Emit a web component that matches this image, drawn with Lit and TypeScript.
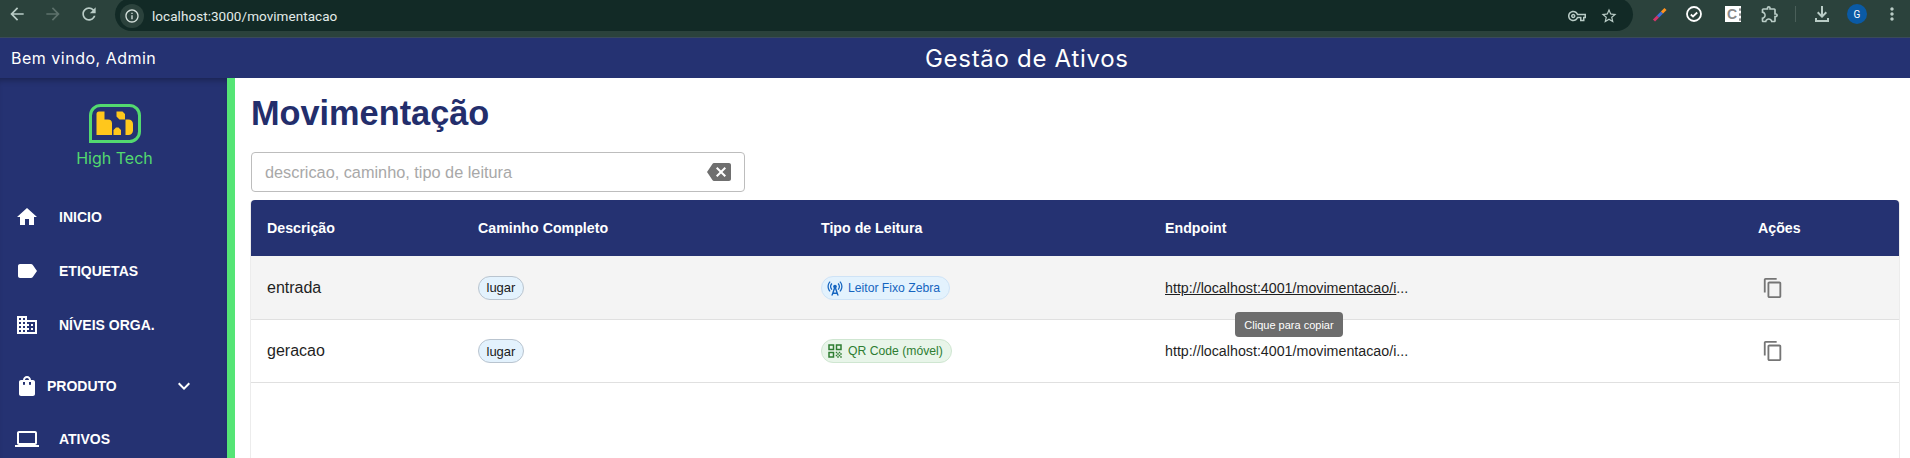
import { LitElement, html, css } from "lit";
import { customElement } from "lit/decorators.js";

const I = (d: string, size = 24, cls = "") => html`<svg class=${cls} width=${size} height=${size} viewBox="0 0 24 24" fill="currentColor"><path d=${d}></path></svg>`;

const ICONS = {
  home: "M10 20v-6h4v6h5v-8h3L12 3 2 12h3v8z",
  label: "M17.63 5.84C17.27 5.33 16.67 5 16 5L5 5.01C3.9 5.01 3 5.9 3 7v10c0 1.1.9 1.99 2 1.99L16 19c.67 0 1.27-.33 1.63-.84L22 12l-4.37-6.16z",
  domain: "M12 7V3H2v18h20V7H12zM6 19H4v-2h2v2zm0-4H4v-2h2v2zm0-4H4V9h2v2zm0-4H4V5h2v2zm4 12H8v-2h2v2zm0-4H8v-2h2v2zm0-4H8V9h2v2zm0-4H8V5h2v2zm10 12h-8v-2h2v-2h-2v-2h2v-2h-2V9h8v10zm-2-8h-2v2h2v-2zm0 4h-2v2h2v-2z",
  bag: "M18 6h-2c0-2.21-1.79-4-4-4S8 3.79 8 6H6c-1.1 0-2 .9-2 2v12c0 1.1.9 2 2 2h12c1.1 0 2-.9 2-2V8c0-1.1-.9-2-2-2zm-8 4c0 .55-.45 1-1 1s-1-.45-1-1V8h2v2zm2-6c1.1 0 2 .9 2 2h-4c0-1.1.9-2 2-2zm4 6c0 .55-.45 1-1 1s-1-.45-1-1V8h2v2z",
  chevron: "M7.41 8.59 12 13.17l4.59-4.58L18 10l-6 6-6-6z",
  laptop: "M20 18c1.1 0 1.99-.9 1.99-2L22 6c0-1.1-.9-2-2-2H4c-1.1 0-2 .9-2 2v10c0 1.1.9 2 2 2H0v2h24v-2h-4zM4 6h16v10H4V6z",
  copy: "M16 1H4c-1.1 0-2 .9-2 2v14h2V3h12V1zm3 4H8c-1.1 0-2 .9-2 2v14c0 1.1.9 2 2 2h11c1.1 0 2-.9 2-2V7c0-1.1-.9-2-2-2zm0 16H8V7h11v14z",
  backspace: "M22 3H7c-.69 0-1.23.35-1.59.88L0 12l5.41 8.11c.36.53.9.89 1.59.89h15c1.1 0 2-.9 2-2V5c0-1.1-.9-2-2-2zm-3 12.59L17.59 17 14 13.41 10.41 17 9 15.59 12.59 12 9 8.41 10.41 7 14 10.59 17.59 7 19 8.41 15.41 12 19 15.59z",
  tower: "M7.3 14.7l1.2-1.2c-1-1-1.5-2.3-1.5-3.5 0-1.3.5-2.6 1.5-3.5L7.3 5.3c-1.3 1.3-2 3-2 4.7s.7 3.4 2 4.7zM19.1 2.9l-1.2 1.2c1.6 1.6 2.4 3.8 2.4 5.9 0 2.1-.8 4.3-2.4 5.9l1.2 1.2c2-2 2.9-4.5 2.9-7.1 0-2.6-1-5.1-2.9-7.1zM6.1 4.1L4.9 2.9C3 4.9 2 7.4 2 10s1 5.1 2.9 7.1l1.2-1.2c-1.6-1.6-2.4-3.8-2.4-5.9 0-2.1.8-4.3 2.4-5.9zm10.6 10.6c1.3-1.3 2-3 2-4.7-.1-1.7-.7-3.4-2-4.7l-1.2 1.2c1 1 1.5 2.3 1.5 3.5 0 1.3-.5 2.6-1.5 3.5l1.2 1.2zM14.5 10c0-1.4-1.1-2.5-2.5-2.5S9.5 8.6 9.5 10c0 .8.4 1.5.9 2L7 22h2l.7-2h4.6l.7 2h2l-3.4-10c.5-.5.9-1.2.9-2zm-4.1 8L12 13.2l1.6 4.8h-3.2z",
  qr: "M3 11h8V3H3v8zm2-6h4v4H5V5zM3 21h8v-8H3v8zm2-6h4v4H5v-4zM13 3v8h8V3h-8zm6 6h-4V5h4v4zM13 13h2v2h-2zM15 15h2v2h-2zM13 17h2v2h-2zM15 19h2v2h-2zM17 17h2v2h-2zM17 13h2v2h-2zM19 15h2v2h-2zM19 19h2v2h-2z",
  back: "M20 11H7.83l5.59-5.59L12 4l-8 8 8 8 1.41-1.41L7.83 13H20v-2z",
  forward: "M12 4l-1.41 1.41L16.17 11H4v2h12.17l-5.58 5.59L12 20l8-8z",
  reload: "M17.65 6.35C16.2 4.9 14.21 4 12 4c-4.42 0-7.99 3.58-7.99 8s3.57 8 7.99 8c3.73 0 6.84-2.55 7.73-6h-2.08c-.82 2.33-3.04 4-5.65 4-3.31 0-6-2.69-6-6s2.69-6 6-6c1.66 0 3.14.69 4.22 1.78L13 11h7V4l-2.35 2.35z",
  info: "M11 7h2v2h-2zm0 4h2v6h-2zm1-9C6.48 2 2 6.48 2 12s4.48 10 10 10 10-4.48 10-10S17.52 2 12 2zm0 18c-4.41 0-8-3.59-8-8s3.59-8 8-8 8 3.59 8 8-3.59 8-8 8z",
  key: "M22 19h-6v-4h-2.68c-1.14 2.32-3.5 4-6.32 4-3.86 0-7-3.14-7-7s3.14-7 7-7c2.82 0 5.18 1.68 6.32 4H24v6h-2v4zm-4-2h2v-4h2v-2H11.95l-.23-.67C11 8.6 9.13 7 7 7c-2.76 0-5 2.24-5 5s2.24 5 5 5c2.13 0 4-1.6 4.72-3.33l.23-.67H18v4zM7 15c-1.65 0-3-1.35-3-3s1.35-3 3-3 3 1.35 3 3-1.35 3-3 3zm0-4c-.55 0-1 .45-1 1s.45 1 1 1 1-.45 1-1-.45-1-1-1z",
  star: "M22 9.24l-7.19-.62L12 2 9.19 8.63 2 9.24l5.46 4.73L5.82 21 12 17.27 18.18 21l-1.63-7.03L22 9.24zM12 15.4l-3.76 2.27 1-4.28-3.32-2.88 4.38-.38L12 6.1l1.71 4.04 4.38.38-3.32 2.88 1 4.28L12 15.4z",
  puzzle: "M10.5 4.5c.28 0 .5.22.5.5v2h6v6h2c.28 0 .5.22.5.5s-.22.5-.5.5h-2v6h-2.12c-.68-1.75-2.39-3-4.38-3s-3.7 1.25-4.38 3H4v-2.12c1.75-.68 3-2.39 3-4.38 0-1.99-1.24-3.7-2.99-4.38L4 7h6V5c0-.28.22-.5.5-.5m0-2C9.12 2.5 8 3.62 8 5H4c-1.1 0-1.99.9-1.99 2v3.8h.49c1.49 0 2.7 1.21 2.7 2.7s-1.21 2.7-2.7 2.7H2V20c0 1.1.9 2 2 2h3.8v-.5c0-1.49 1.21-2.7 2.7-2.7 1.49 0 2.7 1.21 2.7 2.7v.5H17c1.1 0 2-.9 2-2v-4c1.38 0 2.5-1.12 2.5-2.5S20.38 11 19 11V7c0-1.1-.9-2-2-2h-4c0-1.38-1.12-2.5-2.5-2.5z",
  download: "M12 16l-5-5 1.41-1.41L11 12.17V4h2v8.17l2.59-2.58L17 11l-5 5zM5 20v-4h2v2h10v-2h2v4H5z",
  dots: "M12 8c1.1 0 2-.9 2-2s-.9-2-2-2-2 .9-2 2 .9 2 2 2zm0 2c-1.1 0-2 .9-2 2s.9 2 2 2 2-.9 2-2-.9-2-2-2zm0 6c-1.1 0-2 .9-2 2s.9 2 2 2 2-.9 2-2-.9-2-2-2z",
};

@customElement("app-root")
export class AppRoot extends LitElement {
  static styles = css`
    :host { display: block; width: 1910px; height: 458px; overflow: hidden; background: #fff; font-family: "Liberation Sans", Arial, sans-serif; }
    .chrome { height: 37px; background: #2b423c; display: flex; align-items: flex-start; padding-left: 7px; color: #b9ccc6; border-bottom: 1px solid #3a4a5a; overflow: hidden; }
    .nav { display: flex; gap: 16px; align-items: center; height: 28px; }
    .nav .dim { color: #5d716b; }
    .omni { margin-left: 16px; flex: 0 0 1518px; height: 33px; margin-top: -2px; background: #122a26; border-radius: 17px; display: flex; align-items: center; gap: 8px; padding: 2px 0 0 5px; box-sizing: border-box; color: #e3ece9; font: 13.5px Roboto, "Noto Sans", sans-serif; }
    .omni-badge { width: 24px; height: 24px; border-radius: 50%; background: #2b423c; display: flex; align-items: center; justify-content: center; color: #d5e0dc; }
    .url { flex: 1; letter-spacing: .05px; }
    .omni-end { display: flex; gap: 14px; padding-right: 15px; align-items: center; color: #b9ccc6; }
    .tools { flex: 1; display: flex; align-items: center; height: 28px; padding-left: 19px; }
    .tools > * { flex: none; }
    .ext-c { width: 16px; height: 16px; background: #fff; color: #8a8a8a; font: bold 14px/16px "Liberation Sans", sans-serif; display: flex; align-items: center; padding-left: 2px; box-sizing: border-box; gap: 1px; margin: 0 0 0 22px; }
    .ext-c i { display: block; width: 3px; height: 3px; border-radius: 50%; background: #8a8a8a; box-shadow: 0 -5px 0 #8a8a8a, 0 5px 0 #8a8a8a; margin-left: 1px; }
    .m17 { margin-left: 17px; }
    .m19 { margin-left: 19px; }
    .sep { width: 1px; height: 16px; background: #4a5f59; margin-left: 15px; }
    .dl { margin-left: 14px; }
    .avatar { width: 20px; height: 20px; border-radius: 50%; background: #0a5aa5; color: #fff; font: 10px Roboto, sans-serif; display: flex; align-items: center; justify-content: center; margin-left: 13px; }
    .more { margin-left: 15px; }

    .appbar { height: 40px; background: #253272; color: #fff; display: grid; grid-template-columns: 914px auto; align-items: center; padding: 0 11px; position: relative; z-index: 2; }
    .welcome { font: 400 16px Inter, "Open Sans", sans-serif; letter-spacing: .5px; }
    .apptitle { font: 400 24px Inter, "Open Sans", sans-serif; letter-spacing: .7px; }

    .body { display: flex; height: 380px; }
    .side { width: 227px; flex: none; background: #253272; border-right: 8px solid #55e575; color: #fff; box-sizing: content-box; overflow: hidden; box-shadow: inset 0 6px 6px -4px rgba(0,0,0,.3); }
    .brand { display: flex; flex-direction: column; align-items: center; padding: 26px 0 0 2px; }
    .brand-name { font: 400 16px Inter, "Open Sans", sans-serif; color: #53d96f; line-height: 21px; margin-top: 5px; }
    .menu { display: flex; flex-direction: column; margin-top: 21px; }
    .item { height: 54px; display: flex; align-items: center; padding-left: 15px; gap: 20px; font: bold 14px "Liberation Sans", sans-serif; flex: none; }
    .item.sub { gap: 8px; margin-top: 7px; }
    .item.sub .lbl { flex: 1; }
    .item.sub svg:last-child { margin-right: 31px; }
    .item.sm { margin-top: -1px; }

    .main { flex: 1; padding: 13px 11px 0 16px; display: flex; flex-direction: column; min-width: 0; }
    h1 { margin: 0; color: #232e6c; font: bold 34.3px/44px "Liberation Sans", sans-serif; height: 61px; flex: none; }
    .search { width: 494px; height: 40px; flex: none; box-sizing: border-box; border: 1px solid #bdbdbd; border-radius: 4px; display: flex; align-items: center; padding: 0 13px 0 13px; color: #a8a8a8; font-size: 16.3px; }
    .search span { flex: 1; }
    .search svg { color: #6f6f6f; }
    .table { margin-top: 8px; box-shadow: -1px 0 0 #ececec, 1px 0 0 #ececec; border-radius: 4px 4px 0 0; flex: 1; position: relative; }
    .row { display: grid; grid-template-columns: 211px 343px 344px 593px 157px; align-items: center; border-bottom: 1px solid #e0e0e0; height: 63px; box-sizing: border-box; font-size: 16px; color: #1f1f1f; }
    .row.head { height: 56px; background: #253272; color: #fff; font-weight: bold; font-size: 14.2px; border-radius: 4px 4px 0 0; border-bottom: none; }
    .row.odd { background: #f4f4f4; height: 64px; }
    .cell { padding-left: 16px; display: flex; align-items: center; }
    .chip { height: 24px; box-sizing: border-box; border-radius: 12px; display: inline-flex; align-items: center; white-space: nowrap; }
    .lugar { background: #e3f2fd; border: 1px solid #b9c4cf; color: #1a1a1a; padding: 0 7.5px; font-size: 13px; }
    .zebra { background: #e3f2fd; border: 1px solid #cfe3f6; color: #1565c0; padding: 0 9px 0 4px; gap: 4px; font-size: 12.2px; }
    .qrc { background: #e8f5e9; border: 1px solid #cfe6d1; color: #2e7d32; padding: 0 8px 0 4px; gap: 4px; font-size: 12.2px; }
    .link { font-size: 14.25px; }
    .link u { text-underline-offset: 1px; }
    .copy { color: #757575; margin-left: 4px; }
    .tooltip { position: absolute; left: 984px; top: 112px; width: 108px; height: 25px; background: #6d6d6d; color: #fff; border-radius: 4px; font-size: 11px; display: flex; align-items: center; justify-content: center; z-index: 5; }
  `;

  render() {
    return html`
      <div class="chrome">
        <div class="nav">
          ${I(ICONS.back, 20)}${I(ICONS.forward, 20, "dim")}${I(ICONS.reload, 20)}
        </div>
        <div class="omni">
          <div class="omni-badge">${I(ICONS.info, 16)}</div>
          <div class="url">localhost:3000/movimentacao</div>
          <div class="omni-end">${I(ICONS.key, 18)}${I(ICONS.star, 18)}</div>
        </div>
        <div class="tools">
          <svg width="16" height="16" viewBox="0 0 16 16" fill="none" stroke-width="3"><path d="M2 14.500 6 10.500" stroke="#d6336c"></path><path d="M6 10.500 10 6.500" stroke="#3f6fd8"></path><path d="M10 6.500 13.500 3" stroke="#ff9320"></path></svg>
          <svg class="m17" width="18" height="18" viewBox="0 0 18 18" fill="none" stroke="#fff" stroke-width="1.800"><circle cx="9" cy="9" r="7"></circle><path d="M5.800 9.500l2.200 2 4.200-4"></path></svg>
          <div class="ext-c">C<i></i></div>
          ${I(ICONS.puzzle, 20, "m19")}
          <div class="sep"></div>
          ${I(ICONS.download, 24, "dl")}
          <div class="avatar">G</div>
          ${I(ICONS.dots, 20, "more")}
        </div>
      </div>
      <div class="appbar">
        <div class="welcome">Bem vindo, Admin</div>
        <div class="apptitle">Gestão de Ativos</div>
      </div>
      <div class="body">
        <aside class="side">
          <div class="brand">
            <svg width="52" height="39" viewBox="0 0 52 39">
              <path d="M1.500 37.500V11.500a10 10 0 0 1 10-10h29a10 10 0 0 1 10 10v16a10 10 0 0 1-10 10z" fill="none" stroke="#53d96f" stroke-width="3"></path>
              <path fill="#ffc71c" d="M7.500 10a2.500 2.500 0 0 1 2.500-2.500h5.500v8H19a4 4 0 0 1 4 4V31H7.500zM27 23.500h2.500l2.500 2.500v5h-7.500v-5zM27.500 7.500h6l2.500 2.500v5.500h-5.500l-3-3zM36.500 15.500h3a4.500 4.500 0 0 1 4.500 4.500v6.500a4.500 4.500 0 0 1-4.500 4.500h-3z"></path>
            </svg>
            <div class="brand-name">High Tech</div>
          </div>
          <nav class="menu">
            <div class="item">${I(ICONS.home)}<span>INICIO</span></div>
            <div class="item">${I(ICONS.label)}<span>ETIQUETAS</span></div>
            <div class="item">${I(ICONS.domain)}<span>NÍVEIS ORGA.</span></div>
            <div class="item sub">${I(ICONS.bag)}<span class="lbl">PRODUTO</span>${I(ICONS.chevron)}</div>
            <div class="item sm">${I(ICONS.laptop)}<span>ATIVOS</span></div>
          </nav>
        </aside>
        <main class="main">
          <h1>Movimentação</h1>
          <div class="search"><span>descricao, caminho, tipo de leitura</span>${I(ICONS.backspace, 24)}</div>
          <div class="table">
            <div class="row head">
              <div class="cell">Descrição</div><div class="cell">Caminho Completo</div><div class="cell">Tipo de Leitura</div><div class="cell">Endpoint</div><div class="cell">Ações</div>
            </div>
            <div class="row odd">
              <div class="cell">entrada</div>
              <div class="cell"><span class="chip lugar">lugar</span></div>
              <div class="cell"><span class="chip zebra">${I(ICONS.tower, 18)}Leitor Fixo Zebra</span></div>
              <div class="cell link"><span><u>http://localhost:4001/movimentacao/i</u>...</span></div>
              <div class="cell">${I(ICONS.copy, 22, "copy")}</div>
            </div>
            <div class="row">
              <div class="cell">geracao</div>
              <div class="cell"><span class="chip lugar">lugar</span></div>
              <div class="cell"><span class="chip qrc">${I(ICONS.qr, 18)}QR Code (móvel)</span></div>
              <div class="cell link"><span>http://localhost:4001/movimentacao/i...</span></div>
              <div class="cell">${I(ICONS.copy, 22, "copy")}</div>
            </div>
            <div class="tooltip">Clique para copiar</div>
          </div>
        </main>
      </div>
    `;
  }
}
